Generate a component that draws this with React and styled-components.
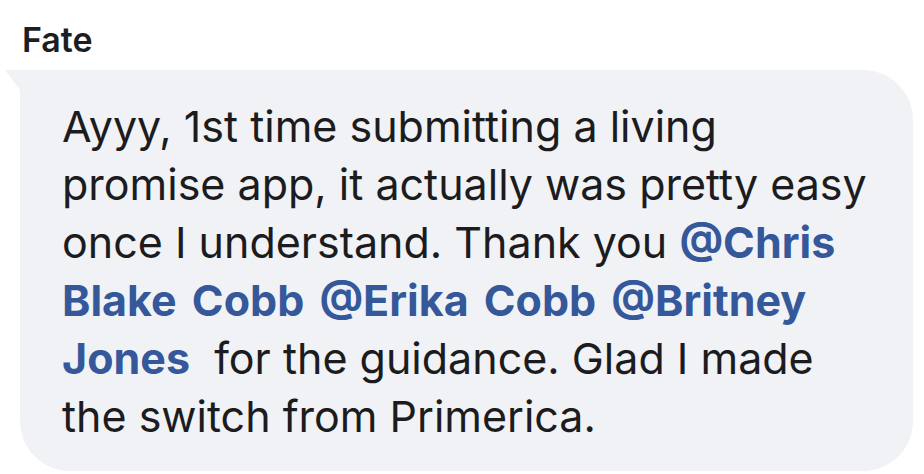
import styled, { createGlobalStyle } from "styled-components";

const GlobalStyle = createGlobalStyle`
    body {
        margin: 0;
        background: #ffffff;
        font-family: Inter, "Noto Sans", sans-serif;
    }
`;

const Thread = styled.div`
    width: 924px;
    height: 474px;
    overflow: hidden;
    padding-top: 18px;
    box-sizing: border-box;
`;

const Author = styled.div`
    margin-left: 22px;
    font-size: 34px;
    font-weight: 600;
    line-height: 44px;
    color: #1c1e21;
    margin-bottom: 8px;
`;

const Bubble = styled.div`
    position: relative;
    margin-left: 20px;
    width: 893px;
    box-sizing: border-box;
    background: #f0f2f5;
    border-radius: 0 50px 50px 50px;
    padding: 27px 30px 26px 42px;
    font-size: 43px;
    line-height: 58px;
    color: #1c1c1e;
    white-space: nowrap;

    /* little tail on the top-left corner */
    &::before {
        content: "";
        position: absolute;
        top: 0;
        left: -15px;
        border-top: 20px solid #f0f2f5;
        border-left: 15px solid transparent;
    }
`;

const Mention = styled.span`
    color: #35589a;
    font-weight: 700;
    word-spacing: 5px;
`;

export default function App() {
    return (
        <>
            <GlobalStyle />
            <Thread>
                <Author>Fate</Author>
                <Bubble>
                    Ayyy, 1st time submitting a living
                    <br />
                    promise app, it actually was pretty easy
                    <br />
                    once I understand. Thank you <Mention>@Chris</Mention>
                    <br />
                    <Mention>Blake Cobb @Erika Cobb @Britney</Mention>
                    <br />
                    <Mention>Jones</Mention>&nbsp; for the guidance. Glad I made
                    <br />
                    the switch from Primerica.
                </Bubble>
            </Thread>
        </>
    );
}
